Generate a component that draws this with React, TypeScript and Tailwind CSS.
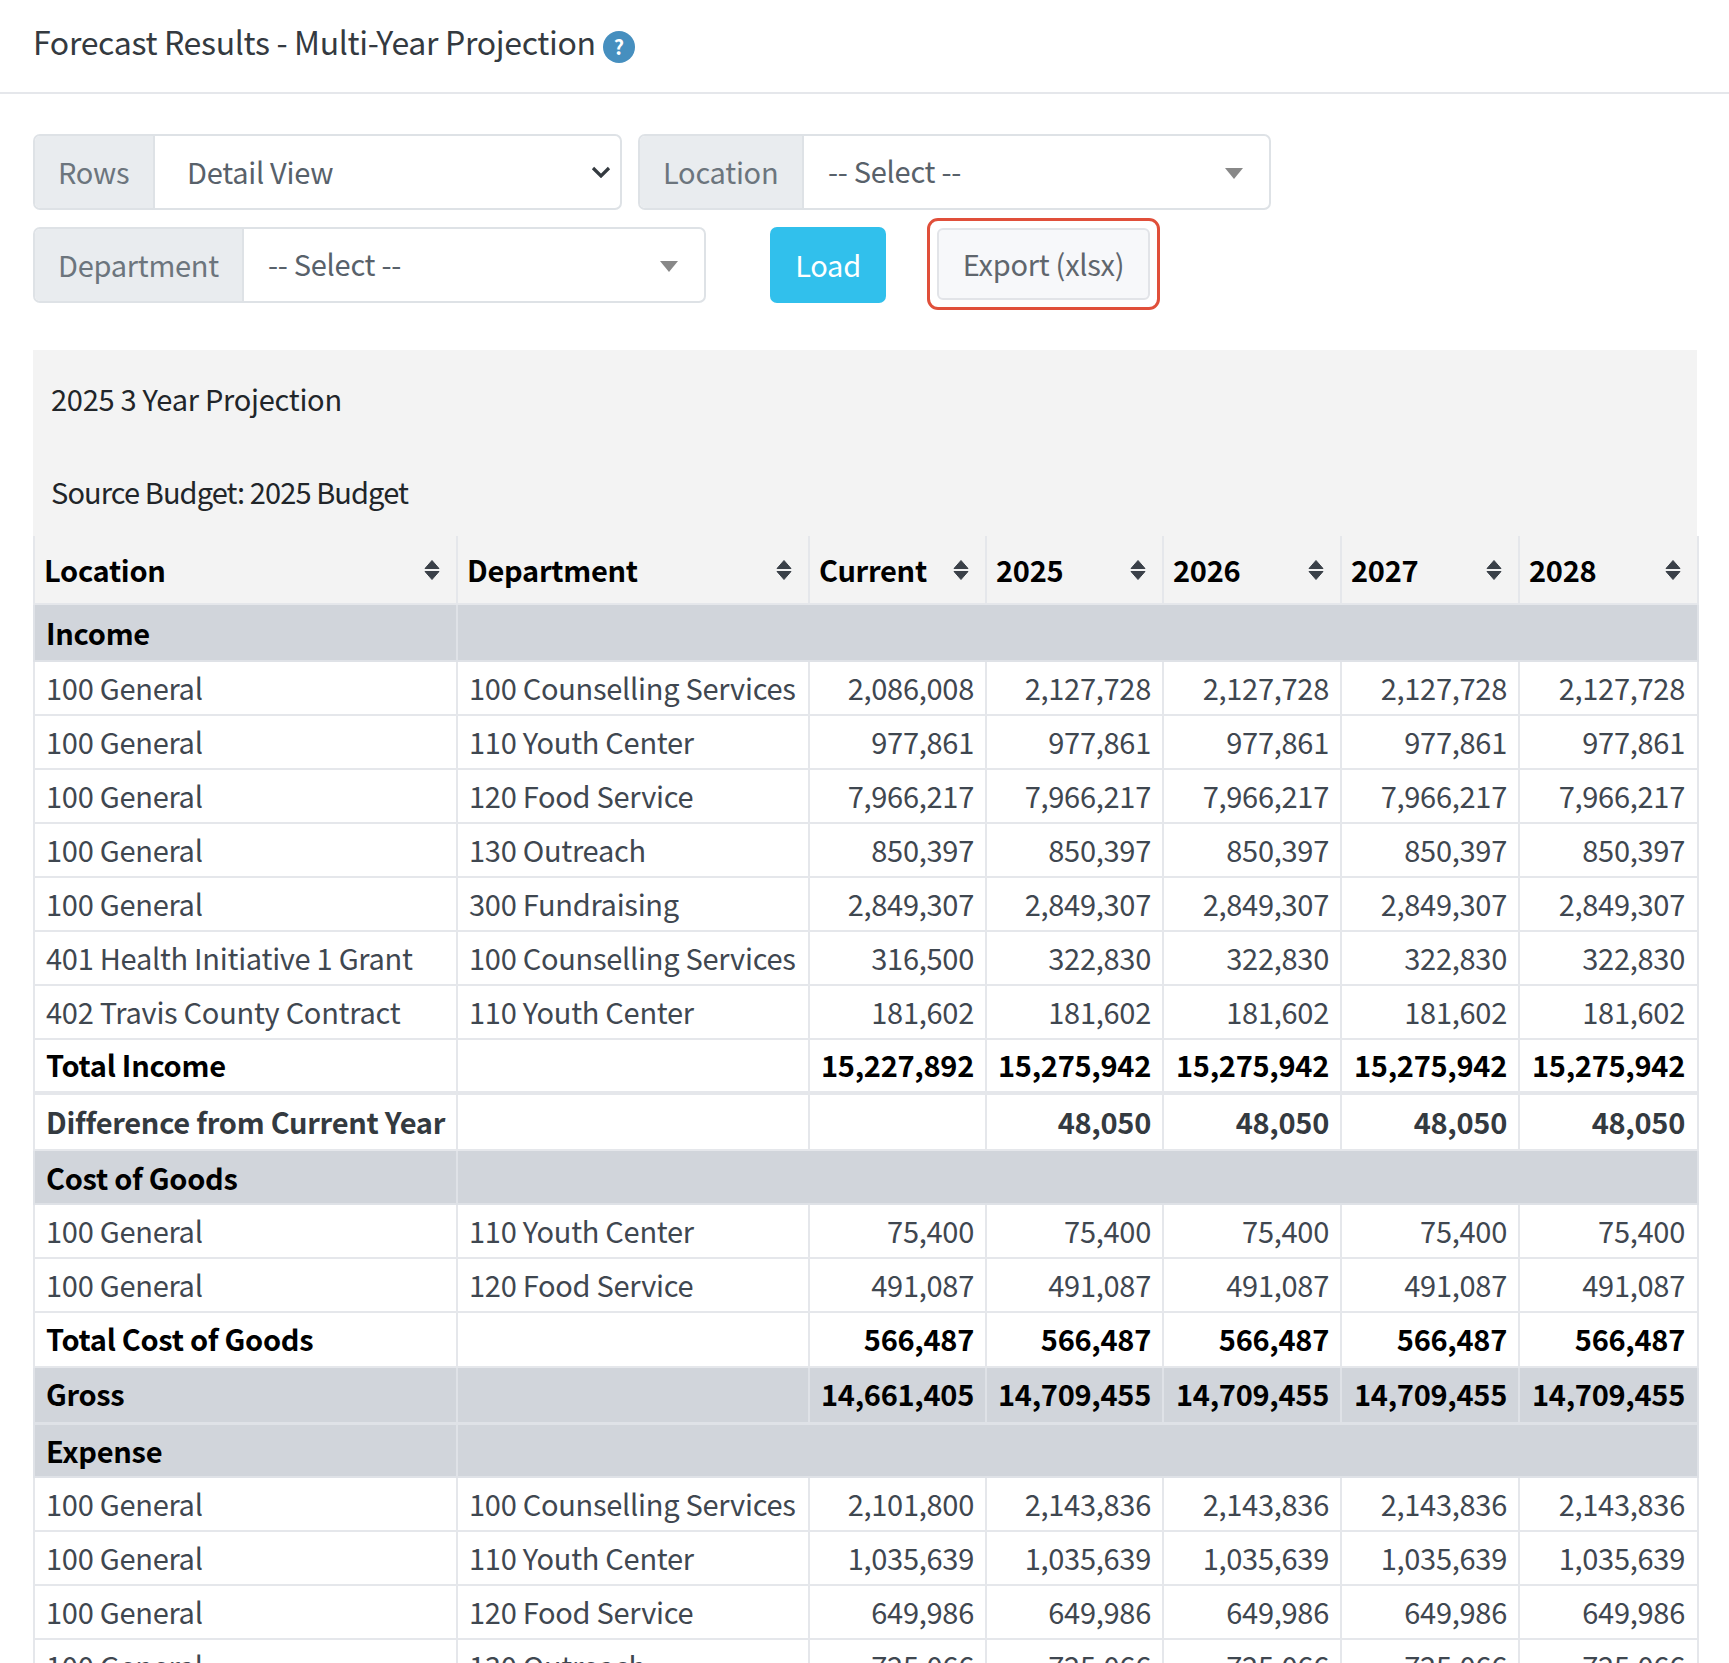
import React from "react";

const font = "font-['Noto_Sans_CJK_SC','Source_Sans_Pro',sans-serif]";

type Row = {
  loc: string;
  dept?: string;
  vals?: string[];
  kind?: "section" | "total" | "diff" | "gross";
  h: string;
};

const rep = (cur: string, rest: string) => [cur, rest, rest, rest, rest];

const rows: Row[] = [
  { loc: "Income", kind: "section", h: "h-[57px]" },
  { loc: "100 General", dept: "100 Counselling Services", vals: rep("2,086,008", "2,127,728"), h: "h-[54px]" },
  { loc: "100 General", dept: "110 Youth Center", vals: rep("977,861", "977,861"), h: "h-[54px]" },
  { loc: "100 General", dept: "120 Food Service", vals: rep("7,966,217", "7,966,217"), h: "h-[54px]" },
  { loc: "100 General", dept: "130 Outreach", vals: rep("850,397", "850,397"), h: "h-[54px]" },
  { loc: "100 General", dept: "300 Fundraising", vals: rep("2,849,307", "2,849,307"), h: "h-[54px]" },
  { loc: "401 Health Initiative 1 Grant", dept: "100 Counselling Services", vals: rep("316,500", "322,830"), h: "h-[54px]" },
  { loc: "402 Travis County Contract", dept: "110 Youth Center", vals: rep("181,602", "181,602"), h: "h-[54px]" },
  { loc: "Total Income", kind: "total", vals: rep("15,227,892", "15,275,942"), h: "h-[54px]" },
  { loc: "Difference from Current Year", kind: "diff", vals: rep("", "48,050"), h: "h-[57px]" },
  { loc: "Cost of Goods", kind: "section", h: "h-[54px]" },
  { loc: "100 General", dept: "110 Youth Center", vals: rep("75,400", "75,400"), h: "h-[54px]" },
  { loc: "100 General", dept: "120 Food Service", vals: rep("491,087", "491,087"), h: "h-[54px]" },
  { loc: "Total Cost of Goods", kind: "total", vals: rep("566,487", "566,487"), h: "h-[55px]" },
  { loc: "Gross", kind: "gross", vals: rep("14,661,405", "14,709,455"), h: "h-[56px]" },
  { loc: "Expense", kind: "section", h: "h-[54px]" },
  { loc: "100 General", dept: "100 Counselling Services", vals: rep("2,101,800", "2,143,836"), h: "h-[54px]" },
  { loc: "100 General", dept: "110 Youth Center", vals: rep("1,035,639", "1,035,639"), h: "h-[54px]" },
  { loc: "100 General", dept: "120 Food Service", vals: rep("649,986", "649,986"), h: "h-[54px]" },
  { loc: "100 General", dept: "130 Outreach", vals: rep("725,066", "725,066"), h: "h-[54px]" },
];

const cols = ["Location", "Department", "Current", "2025", "2026", "2027", "2028"];

const body = "text-[29px] tracking-[-0.27px]";

function SortIcon() {
  return (
    <svg viewBox="0 0 16 22" className="w-[16px] h-[22px] shrink-0" fill="#3a4048" stroke="#3a4048" strokeWidth="1" strokeLinejoin="round">
      <path d="M8 1.5 L15 9.5 H1 Z" />
      <path d="M8 20.5 L15 12.5 H1 Z" />
    </svg>
  );
}

function InputGroup({ label, labelW, width, children }: { label: string; labelW: string; width: string; children: React.ReactNode }) {
  return (
    <div className={`flex h-[76px] ${width} border-2 border-[#dee2e6] rounded-[7px] overflow-hidden bg-white`}>
      <div className={`${labelW} flex items-center pl-[23px] pb-[2px] bg-[#e9ecef] border-r-2 border-[#dee2e6] text-[#6c757d] ${body} shrink-0`}>
        {label}
      </div>
      {children}
    </div>
  );
}

function SelectBox() {
  return (
    <div className={`flex-1 flex items-center justify-between pl-[24px] pr-[26px] text-[#58616a] ${body}`}>
      <span className="-mt-[3px]">-- Select --</span>
      <span className="w-0 h-0 mt-[3px] border-x-[9px] border-x-transparent border-t-[11px] border-t-[#888888]" />
    </div>
  );
}

export default function App() {
  return (
    <div className={`${font} h-[1663px] overflow-hidden bg-white text-[#212529] leading-none`}>
      <div className="h-[94px] border-b-2 border-[#e5e7eb] pl-[33px] pt-[23px] flex items-start">
        <h1 className="text-[32px] tracking-[-0.32px] font-normal text-[#343a40] leading-[36px]">Forecast Results - Multi-Year Projection</h1>
        <div className="ml-[7px] mt-[8px] w-[32px] h-[32px] rounded-full bg-[#468fbf] flex items-center justify-center text-white text-[20px] font-bold">?</div>
      </div>

      <div className="px-[33px] pt-[40px]">
        <div className="flex gap-[16px]">
          <InputGroup label="Rows" labelW="w-[120px]" width="w-[589px]">
            <div className={`flex-1 flex items-center justify-between pl-[32px] pb-[2px] pr-[9px] text-[#58616a] ${body}`}>
              <span>Detail View</span>
              <svg viewBox="0 0 20 12" className="w-[20px] h-[12px] mt-[2px]" fill="none" stroke="#343a40" strokeWidth="3.2">
                <path d="M2 2 L10 10 L18 2" />
              </svg>
            </div>
          </InputGroup>
          <InputGroup label="Location" labelW="w-[164px]" width="w-[633px]">
            <SelectBox />
          </InputGroup>
        </div>

        <div className="flex items-center mt-[17px]">
          <InputGroup label="Department" labelW="w-[209px]" width="w-[673px]">
            <SelectBox />
          </InputGroup>
          <button className={`ml-[64px] w-[116px] h-[76px] pb-[2px] rounded-[7px] bg-[#31c0ec] text-white ${body}`}>Load</button>
          <div className="ml-[41px] -mt-[9px] -mb-[7px] p-[7px] border-[3px] border-[#e04f3a] rounded-[11px]">
            <button className={`block w-[213px] h-[72px] pb-[2px] rounded-[6px] border-2 border-[#e2e4e8] bg-[#f7f8fa] text-[#5f666d] ${body}`}>Export (xlsx)</button>
          </div>
        </div>

        <div className="mt-[47px] w-[1664px] bg-[#f3f3f3]">
          <div className={`px-[18px] text-[#212529] ${body}`}>
            <p className="h-[93px] pt-[30px] leading-[36px]">2025 3 Year Projection</p>
            <p className="h-[93px] pt-[30px] leading-[36px] tracking-[-0.9px]">Source Budget: 2025 Budget</p>
          </div>
          <table className="table-fixed border-collapse w-[1664px]">
            <colgroup>
              <col className="w-[423px]" />
              <col className="w-[352px]" />
              <col className="w-[177px]" />
              <col className="w-[177px]" />
              <col className="w-[178px]" />
              <col className="w-[178px]" />
              <col className="w-[179px]" />
            </colgroup>
            <thead>
              <tr className="h-[68px]">
                {cols.map((c) => (
                  <th key={c} className={`border-2 border-[#e5e7eb] border-t-0 px-[9px] text-left font-bold text-black ${body}`}>
                    <div className="flex items-center justify-between pr-[7px]">
                      <span>{c}</span>
                      <SortIcon />
                    </div>
                  </th>
                ))}
              </tr>
            </thead>
            <tbody>
              {rows.map((r, i) => {
                const bold = r.kind !== undefined;
                const shaded = r.kind === "section" || r.kind === "gross";
                const tone = r.kind === "diff" ? "text-[#343a40]" : bold ? "text-black" : "text-[#3f4750]";
                const line = shaded ? "border-[#dfe2e7]" : "border-[#e5e7eb]";
                const thick = r.loc === "Total Income" ? "border-b-4" : r.kind === "gross" ? "border-b-[3px]" : "";
                const lift = r.kind === "section" ? "" : "pb-[2px]";
                return (
                  <tr key={i} className={`${r.h} ${shaded ? "bg-[#d1d5db]" : "bg-white"} ${tone} ${bold ? "font-bold" : "font-normal"} ${body}`}>
                    <td className={`border-2 ${line} ${thick} ${lift} px-[11px] whitespace-nowrap`}>{r.loc}</td>
                    {r.kind === "section" ? (
                      <td colSpan={6} className={`border-2 ${line}`} />
                    ) : (
                      <>
                        <td className={`border-2 ${line} ${thick} ${lift} px-[11px] whitespace-nowrap`}>{r.dept}</td>
                        {(r.vals ?? []).map((v, j) => (
                          <td key={j} className={`border-2 ${line} ${thick} ${lift} pl-[10px] ${j === 4 ? "pr-[12px]" : "pr-[11px]"} text-right whitespace-nowrap`}>
                            {v}
                          </td>
                        ))}
                      </>
                    )}
                  </tr>
                );
              })}
            </tbody>
          </table>
        </div>
      </div>
    </div>
  );
}
